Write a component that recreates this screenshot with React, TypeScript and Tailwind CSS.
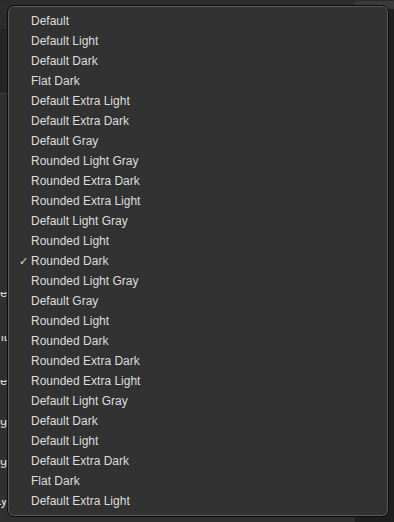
import React from 'react';

const themes = [
    "Default",
    "Default Light",
    "Default Dark",
    "Flat Dark",
    "Default Extra Light",
    "Default Extra Dark",
    "Default Gray",
    "Rounded Light Gray",
    "Rounded Extra Dark",
    "Rounded Extra Light",
    "Default Light Gray",
    "Rounded Light",
    "Rounded Dark",
    "Rounded Light Gray",
    "Default Gray",
    "Rounded Light",
    "Rounded Dark",
    "Rounded Extra Dark",
    "Rounded Extra Light",
    "Default Light Gray",
    "Default Dark",
    "Default Light",
    "Default Extra Dark",
    "Flat Dark",
    "Default Extra Light",
];

const selected = 12;

// labels of the settings panel behind the menu, only their last letters peek out
const labels = [
    { text: "Theme", h: "h-[44px]" },
    { text: "Font", h: "h-[44px]" },
    { text: "Size", h: "h-[40px]" },
    { text: "Spacing", h: "h-[40px]" },
    { text: "Padding", h: "h-[40px]" },
    { text: "Opacity", h: "h-[40px]" },
];

function MenuItem({ label, checked }: { label: string; checked: boolean }) {
    return (
        <div className="h-[20px] flex items-center pl-[11px] text-[12px] text-[#dedede] leading-none">
            <span className="w-[12px] text-[11px] font-['DejaVu_Sans',sans-serif]">{checked ? "✓" : ""}</span>
            <span>{label}</span>
        </div>
    );
}

export default function App() {
    return (
        <div className="relative w-[394px] h-[522px] overflow-hidden bg-[#2e2e2e] font-['Liberation_Sans',Arial,sans-serif]">
            <div className="flex flex-col h-full">
                <div className="h-[92px] bg-[#3c3c3c] border-b border-[#2a2a2a]" />
                <div className="flex flex-1">
                    <div className="w-[355px] flex flex-col">
                        <div className="h-[28px] bg-[#2c2c2c]" />
                        <div className="h-[65px] bg-[#262626] border-b border-[#3e3e3e]" />
                        <div className="flex-1 bg-[#303030] pt-[198px]">
                            {labels.map((l, i) => (
                                <div key={i} className={`${l.h} w-[7px] overflow-hidden flex justify-end items-start`}>
                                    <span className="whitespace-nowrap text-[12px] text-[#e0e0e0] -mt-[8px]">{l.text}</span>
                                </div>
                            ))}
                        </div>
                    </div>
                    <div className="flex-1 flex flex-col">
                        <div className="h-[8px] bg-[#3a3a3a]" />
                        <div className="flex-1 bg-[#1f1f1f]" />
                    </div>
                </div>
            </div>

            <div className="absolute left-[7px] top-[5px] w-[382px] h-[512px] rounded-[7px] border border-[#0c0c0c] bg-[#323232] shadow-[inset_0_0_0_1px_#5a5a5a] pt-[5px]">
                {themes.map((t, i) => (
                    <MenuItem key={i} label={t} checked={i === selected} />
                ))}
            </div>
        </div>
    );
}
